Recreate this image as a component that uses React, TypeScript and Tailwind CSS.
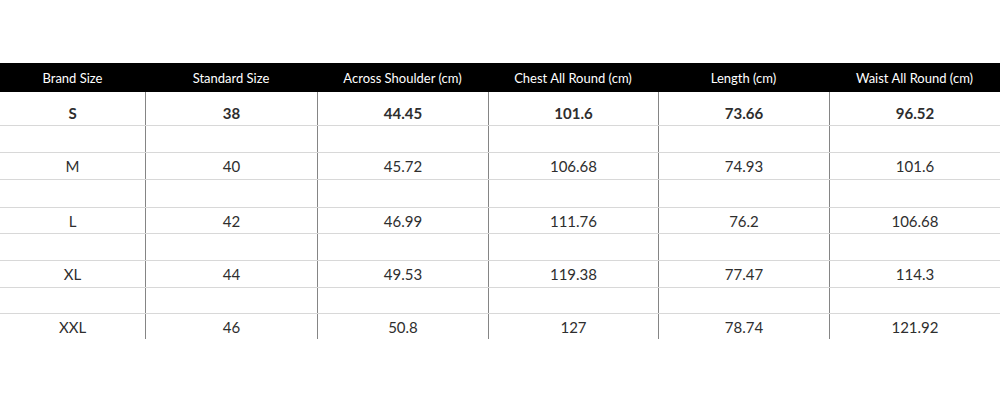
const headers = [
  "Brand Size",
  "Standard Size",
  "Across Shoulder (cm)",
  "Chest All Round (cm)",
  "Length (cm)",
  "Waist All Round (cm)",
];

const rows = [
  ["S", "38", "44.45", "101.6", "73.66", "96.52"],
  ["M", "40", "45.72", "106.68", "74.93", "101.6"],
  ["L", "42", "46.99", "111.76", "76.2", "106.68"],
  ["XL", "44", "49.53", "119.38", "77.47", "114.3"],
  ["XXL", "46", "50.8", "127", "78.74", "121.92"],
];

// heights of data rows and the blank spacer rows between them
const rowHeights = ["h-[34px]", "h-[27px]", "h-[26px]", "h-[27px]", "h-[25px]"];
const spacerHeights = ["h-[27px]", "h-[28px]", "h-[27px]", "h-[26px]"];

const grid = "grid grid-cols-[145px_172px_171px_170px_171px_171px]";

function Row({ cells, height, bold, last }: { cells: string[]; height: string; bold?: boolean; last?: boolean }) {
  return (
    <div className={`${grid} ${height} ${last ? "" : "border-b border-[#d8d8d8]"}`}>
      {cells.map((c, i) => (
        <div
          key={i}
          className={`flex items-center justify-center text-[15px] text-[#2e2e2e] ${
            bold ? "font-bold pt-[9px]" : "pt-[1px]"
          } ${i > 0 ? "border-l border-[#858585]" : ""}`}
        >
          {c}
        </div>
      ))}
    </div>
  );
}

export default function App() {
  return (
    <div className="w-[1000px] h-[400px] bg-white pt-[63px]" style={{ fontFamily: "Lato, 'Open Sans', sans-serif" }}>
      <div className={`${grid} h-[29px] bg-black`}>
        {headers.map((h) => (
          <div key={h} className="flex items-center justify-center text-[13px] text-white pt-[3px]">
            {h}
          </div>
        ))}
      </div>
      {rows.map((r, i) => (
        <div key={r[0]}>
          <Row cells={r} height={rowHeights[i]} bold={i === 0} last={i === rows.length - 1} />
          {i < rows.length - 1 && <Row cells={["", "", "", "", "", ""]} height={spacerHeights[i]} />}
        </div>
      ))}
    </div>
  );
}
